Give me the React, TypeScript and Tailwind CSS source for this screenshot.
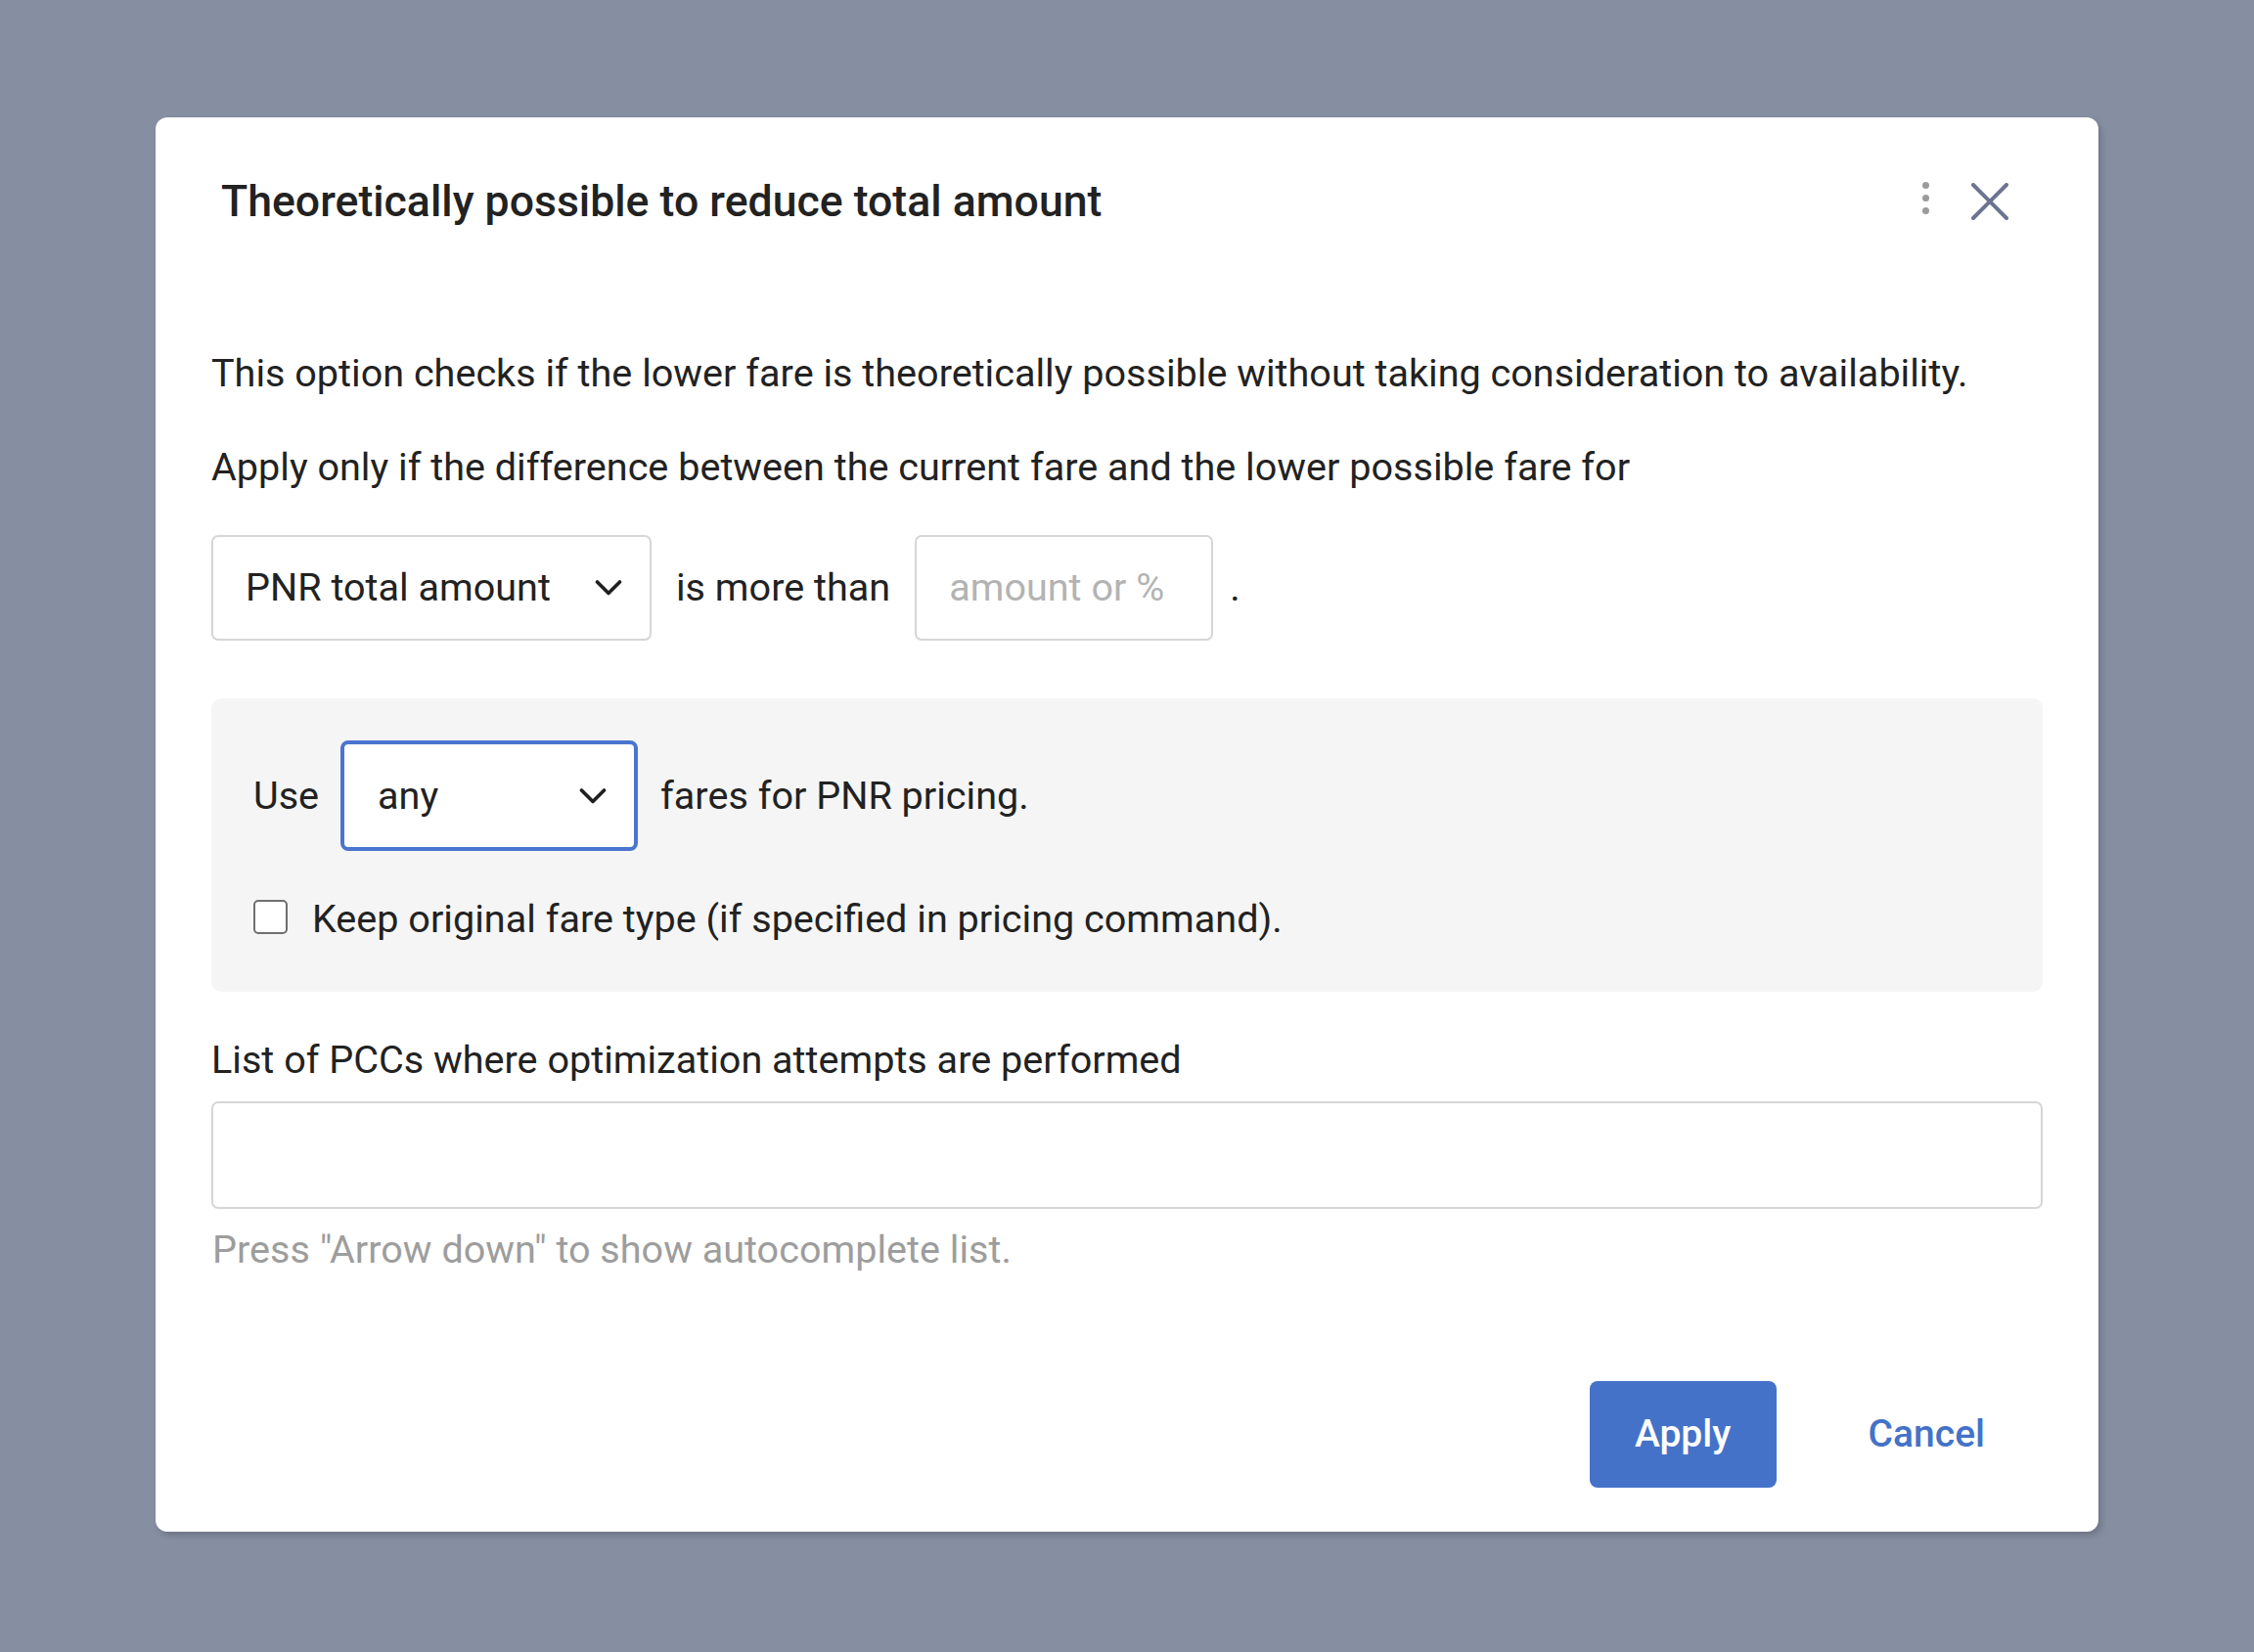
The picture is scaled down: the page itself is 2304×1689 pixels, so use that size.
import React from "react";

function Chevron() {
  return (
    <svg width="28" height="18" viewBox="0 0 28 18" fill="none">
      <path d="M2.5 3 L14 14.5 L25.5 3" stroke="#1f1f1f" strokeWidth="3.6" strokeLinecap="round" strokeLinejoin="round" />
    </svg>
  );
}

export default function App() {
  return (
    <div className="w-full h-[1689px] bg-[#868fa2] pt-[120px] pl-[159px] font-['Roboto','Liberation_Sans',sans-serif] text-[#222]">
      <div className="w-[1986px] h-[1446px] bg-white rounded-[12px] shadow-[3px_4px_6px_rgba(0,0,0,0.18)] flex flex-col">
        {/* header */}
        <div className="mt-[56px] h-[60px] flex items-center pl-[67px] pr-[91px]">
          <h2 className="text-[44.6px] font-medium leading-[60px] flex-1">Theoretically possible to reduce total amount</h2>
          <div className="flex flex-col gap-[6px] mr-[42px] -mt-[8px]">
            <span className="w-[7px] h-[7px] rounded-full bg-[#9b9b9b]" />
            <span className="w-[7px] h-[7px] rounded-full bg-[#9b9b9b]" />
            <span className="w-[7px] h-[7px] rounded-full bg-[#9b9b9b]" />
          </div>
          <svg width="40" height="38" viewBox="0 0 40 38" fill="none">
            <path d="M3 2 L37 36 M37 2 L3 36" stroke="#6b7590" strokeWidth="4" strokeLinecap="round" />
          </svg>
        </div>

        {/* body */}
        <div className="px-[57px] flex flex-col text-[39.6px] leading-[48px]">
          <p className="mt-[122px]">This option checks if the lower fare is theoretically possible without taking consideration to availability.</p>
          <p className="mt-[48px]">Apply only if the difference between the current fare and the lower possible fare for</p>

          <div className="mt-[45px] flex items-center">
            <div className="w-[450px] h-[108px] border-2 border-[#d6d6d8] rounded-[7px] flex items-center justify-between pl-[33px] pr-[28px]">
              <span>PNR total amount</span>
              <Chevron />
            </div>
            <span className="ml-[25px] mr-[25px]">is more than</span>
            <div className="w-[305px] h-[108px] border-2 border-[#d6d6d8] rounded-[7px] flex items-center pl-[33px]">
              <span className="text-[#b3b3b3]">amount or %</span>
            </div>
            <span className="ml-[17px]">.</span>
          </div>

          <div className="mt-[59px] h-[300px] bg-[#f5f5f5] rounded-[10px] pl-[43px] pt-[43px] flex flex-col">
            <div className="flex items-center">
              <span>Use</span>
              <div className="ml-[22px] w-[304px] h-[113px] border-[4px] border-[#4a74d0] rounded-[8px] bg-white flex items-center justify-between pl-[34px] pr-[28px]">
                <span>any</span>
                <Chevron />
              </div>
              <span className="ml-[23px]">fares for PNR pricing.</span>
            </div>
            <div className="mt-[46px] flex items-center">
              <span className="w-[35px] h-[35px] border-[2.5px] border-[#6f6f6f] rounded-[5px] bg-white -mt-[6px]" />
              <span className="ml-[25px]">Keep original fare type (if specified in pricing command).</span>
            </div>
          </div>

          <p className="mt-[46px]">List of PCCs where optimization attempts are performed</p>
          <div className="mt-[18px] h-[110px] border-2 border-[#d6d6d8] rounded-[7px]" />
          <p className="mt-[18px] ml-[1px] text-[#9d9d9d]">Press "Arrow down" to show autocomplete list.</p>
        </div>

        {/* footer */}
        <div className="mt-auto mb-[45px] flex items-center justify-end pr-[116px]">
          <button className="w-[191px] h-[109px] rounded-[8px] bg-[#4472c8] text-white text-[39px] font-medium">Apply</button>
          <button className="ml-[94px] text-[#4472c8] text-[39px] font-medium">Cancel</button>
        </div>
      </div>
    </div>
  );
}
